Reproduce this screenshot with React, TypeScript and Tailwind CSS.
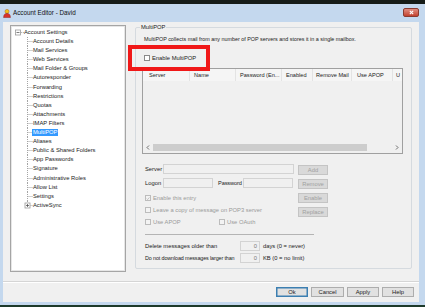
import React from "react";

const font = "font-['Liberation_Sans',Arial,sans-serif]";

const treeChildren = [
  "Account Details",
  "Mail Services",
  "Web Services",
  "Mail Folder & Groups",
  "Autoresponder",
  "Forwarding",
  "Restrictions",
  "Quotas",
  "Attachments",
  "IMAP Filters",
  "MultiPOP",
  "Aliases",
  "Public & Shared Folders",
  "App Passwords",
  "Signature",
  "Administrative Roles",
  "Allow List",
  "Settings",
  "ActiveSync",
];

const columns = [
  { label: "Server", w: "w-[47px]", pl: "pl-[6px]" },
  { label: "Name", w: "w-[46px]", pl: "pl-[4px]" },
  { label: "Password (En...", w: "w-[46px]", pl: "pl-[4px]" },
  { label: "Enabled", w: "w-[31px]", pl: "pl-[4px]" },
  { label: "Remove Mail", w: "w-[39px]", pl: "pl-[3px]" },
  { label: "Use APOP", w: "w-[41px]", pl: "pl-[5px]" },
  { label: "U", w: "w-[20px]", pl: "pl-[3px]" },
];

const Connector = ({ last, plus }: { last?: boolean; plus?: boolean }) => (
  <svg width="9" height="9.1" viewBox="0 0 9 9.1" className="shrink-0">
    <line x1="3.5" y1="0" x2="3.5" y2={last ? 4.5 : 9.1} stroke="#a3a3a3" strokeDasharray="1 1" />
    <line x1="3.5" y1="4.5" x2="9" y2="4.5" stroke="#a3a3a3" strokeDasharray="1 1" />
    {plus && (
      <>
        <rect x="1" y="2" width="5" height="5" fill="#fff" stroke="#9a9a9a" strokeWidth="0.8" />
        <line x1="2" y1="4.5" x2="5" y2="4.5" stroke="#444" strokeWidth="0.7" />
        <line x1="3.5" y1="3" x2="3.5" y2="6" stroke="#444" strokeWidth="0.7" />
      </>
    )}
  </svg>
);

const Check = ({ checked, disabled }: { checked?: boolean; disabled?: boolean }) => (
  <span
    className={`flex h-[6px] w-[6px] shrink-0 items-center justify-center border ${
      disabled ? "border-[#bcbcbc] bg-[#f3f3f3]" : "border-[#8a8a8a] bg-white"
    }`}
  >
    {checked && (
      <svg width="5" height="5" viewBox="0 0 5 5">
        <path d="M0.8 2.6 L2 3.8 L4.3 1.1" fill="none" stroke="#a8a8a8" strokeWidth="0.8" />
      </svg>
    )}
  </span>
);

const CheckRow = ({ label, checked, disabled }: { label: string; checked?: boolean; disabled?: boolean }) => (
  <div className="flex h-[6px] items-center gap-[2px]">
    <Check checked={checked} disabled={disabled} />
    <span className={`whitespace-nowrap text-[5.8px] leading-[6px] ${disabled ? "text-[#9a9a9a]" : "text-[#1a1a1a]"}`}>
      {label}
    </span>
  </div>
);

const Field = ({ w, value }: { w: string; value?: string }) => (
  <div className={`${w} h-[10px] shrink-0 border border-[#d3d3d3] bg-[#f0f0f0] pr-[2px] text-right text-[5.8px] leading-[8px] text-[#7a7a7a]`}>
    {value}
  </div>
);

const SideButton = ({ label }: { label: string }) => (
  <div className="flex h-[10px] w-[30px] items-center justify-center border border-[#c4c4c4] bg-[#d9d9d9] text-[5.8px] text-[#a0a0a0]">
    {label}
  </div>
);

const DialogButton = ({ label, w, primary }: { label: string; w: string; primary?: boolean }) => (
  <div
    className={`flex h-[10px] ${w} items-center justify-center border bg-[#e1e1e1] text-[5.8px] text-[#1a1a1a] ${
      primary ? "border-[#3c7fb1] shadow-[inset_0_0_0_0.5px_#3c7fb1]" : "border-[#adadad]"
    }`}
  >
    {label}
  </div>
);

const Chevron = ({ dir }: { dir: "l" | "r" }) => (
  <svg width="4" height="5" viewBox="0 0 4 5">
    <path d={dir === "l" ? "M3 0.5 L1 2.5 L3 4.5" : "M1 0.5 L3 2.5 L1 4.5"} fill="none" stroke="#606060" strokeWidth="0.9" />
  </svg>
);

export default function App() {
  return (
    <div className={`relative flex h-[307px] w-[425px] flex-col overflow-hidden bg-[#1d3a2b] text-[#1a1a1a] ${font}`}>
      <div className="h-[4px] shrink-0 bg-[#161c18]" />

      {/* window frame */}
      <div className="flex h-[301px] shrink-0 flex-col bg-[#c4d8ee] pb-[3px] pl-[3px] pr-[6px]">
        {/* title bar */}
        <div className="flex h-[18px] shrink-0 items-center">
          <svg width="8" height="9" viewBox="0 0 8 9" className="shrink-0">
            <circle cx="4" cy="2.4" r="2" fill="#f2c21b" stroke="#b3650f" strokeWidth="0.5" />
            <path d="M0.6 8.6 C0.6 5.4 2 4.4 4 4.4 C6 4.4 7.4 5.4 7.4 8.6 Z" fill="#d8322a" stroke="#8e1a14" strokeWidth="0.5" />
          </svg>
          <span className="ml-[2px] text-[6.3px] text-[#111]">Account Editor - David</span>
          <div className="ml-auto mt-[-2px] flex h-[9px] w-[16px] items-center justify-center rounded-[2px] border border-[#8a3b30] bg-gradient-to-b from-[#e08c80] to-[#c2402d]">
            <svg width="5" height="5" viewBox="0 0 5 5">
              <path d="M0.8 0.8 L4.2 4.2 M4.2 0.8 L0.8 4.2" stroke="#fff" strokeWidth="1.1" />
            </svg>
          </div>
        </div>

        {/* client area */}
        <div className="flex flex-1 flex-col bg-[#f0f0f0]">
          <div className="flex h-[250px] shrink-0 items-start pt-[3px]">
            {/* tree */}
            <div className="ml-[7px] h-[247px] w-[116px] shrink-0 border border-[#a5a5a5] bg-white pt-[2px] shadow-[inset_0_0_0_1px_#e6e6e6]">
              <div className="flex h-[9.1px] items-center">
                <svg width="13" height="9.1" viewBox="0 0 13 9.1" className="shrink-0">
                  <rect x="4.5" y="2" width="5" height="5" fill="#fff" stroke="#9a9a9a" strokeWidth="0.8" />
                  <line x1="5.5" y1="4.5" x2="8.5" y2="4.5" stroke="#444" strokeWidth="0.7" />
                  <line x1="9.8" y1="4.5" x2="13" y2="4.5" stroke="#a3a3a3" strokeDasharray="1 1" />
                </svg>
                <span className="text-[5.8px] leading-[9.1px]">Account Settings</span>
              </div>
              {treeChildren.map((item, i) => {
                const last = i === treeChildren.length - 1;
                return (
                  <div key={item} className="flex h-[9.1px] items-center pl-[13px]">
                    <Connector last={last} plus={last} />
                    {item === "MultiPOP" ? (
                      <span className="-ml-[1px] bg-[#3399ff] px-[1px] text-[5.8px] leading-[7px] text-white">{item}</span>
                    ) : (
                      <span className="whitespace-nowrap text-[5.8px] leading-[9.1px]">{item}</span>
                    )}
                  </div>
                );
              })}
            </div>

            {/* group box */}
            <div className="relative ml-[9px] mt-[2px] flex h-[242px] w-[277px] shrink-0 flex-col rounded-[2px] border border-[#d5dadf] pl-[6px]">
              <span className="absolute -top-[4px] left-[4px] bg-[#f0f0f0] px-[1px] text-[5.8px] leading-[7px]">MultiPOP</span>

              <div className="ml-[2px] mt-[7px] h-[8px] whitespace-nowrap text-[5.4px] leading-[8px]">
                MultiPOP collects mail from any number of POP servers and stores it in a single mailbox.
              </div>

              <div className="ml-[2px] mt-[12px]">
                <CheckRow label="Enable MultiPOP" />
              </div>

              {/* list view */}
              <div className="mt-[7px] flex h-[86px] w-[261px] flex-col border border-[#a0a0a0] bg-[#f0f0f0]">
                <div className="flex h-[12px] shrink-0 bg-[#f5f5f5]">
                  {columns.map((c, i) => (
                    <div
                      key={c.label}
                      className={`${c.w} ${c.pl} flex shrink-0 items-center overflow-hidden whitespace-nowrap text-[5.6px] ${
                        i < columns.length - 1 ? "border-r border-[#e3e3e3]" : ""
                      }`}
                    >
                      {c.label}
                    </div>
                  ))}
                </div>
                <div className="flex-1" />
                <div className="mb-[2px] flex h-[8px] shrink-0 items-center">
                  <div className="flex w-[10px] justify-center">
                    <Chevron dir="l" />
                  </div>
                  <div className="h-[7px] w-[214px] bg-[#cdcdcd]" />
                  <div className="flex-1" />
                  <div className="flex w-[10px] justify-center">
                    <Chevron dir="r" />
                  </div>
                </div>
              </div>

              {/* entry editor */}
              <div className="mt-[10px] flex">
                <div className="ml-[3px] flex w-[149px] flex-col">
                  <div className="flex h-[10px] items-center">
                    <span className="w-[18px] shrink-0 text-[5.8px]">Server</span>
                    <Field w="flex-1" />
                  </div>
                  <div className="mt-[4px] flex h-[10px] items-center">
                    <span className="w-[18px] shrink-0 text-[5.8px]">Logon</span>
                    <Field w="w-[50px]" />
                    <span className="ml-[5px] w-[25px] shrink-0 whitespace-nowrap text-[5.6px] tracking-[-0.1px]">Password</span>
                    <Field w="w-[50px]" />
                  </div>
                  <div className="mt-[7px] flex flex-col gap-[6px]">
                    <CheckRow label="Enable this entry" checked disabled />
                    <CheckRow label="Leave a copy of message on POP3 server" disabled />
                    <div className="flex">
                      <div className="w-[74px]">
                        <CheckRow label="Use APOP" disabled />
                      </div>
                      <CheckRow label="Use OAuth" disabled />
                    </div>
                  </div>
                </div>
                <div className="ml-[4px] mt-[1px] flex flex-col gap-[4px]">
                  <SideButton label="Add" />
                  <SideButton label="Remove" />
                  <SideButton label="Enable" />
                  <SideButton label="Replace" />
                </div>
              </div>

              <div className="ml-[3px] mt-[9px] h-[1px] w-[169px] bg-[#b4b4b4]" />

              <div className="ml-[3px] mt-[6px] flex h-[10px] items-center">
                <span className="w-[95px] shrink-0 whitespace-nowrap text-[5.8px]">Delete messages older than</span>
                <Field w="w-[20px]" value="0" />
                <span className="ml-[3px] whitespace-nowrap text-[5.8px]">days (0 = never)</span>
              </div>
              <div className="ml-[3px] mt-[2px] flex h-[10px] items-center">
                <span className="w-[95px] shrink-0 whitespace-nowrap text-[5.4px] tracking-[-0.12px]">
                  Do not download messages larger than
                </span>
                <Field w="w-[20px]" value="0" />
                <span className="ml-[3px] whitespace-nowrap text-[5.8px]">KB (0 = no limit)</span>
              </div>
            </div>
          </div>

          <div className="mt-[9px] h-[2px] shrink-0 border-b border-t border-b-white border-t-[#d5d5d5]" />

          <div className="mt-[4px] flex h-[10px] shrink-0 justify-end gap-[3px] pr-[5px]">
            <DialogButton label="Ok" w="w-[32px]" primary />
            <DialogButton label="Cancel" w="w-[33px]" />
            <DialogButton label="Apply" w="w-[32px]" />
            <DialogButton label="Help" w="w-[32px]" />
          </div>
        </div>
      </div>

      <div className="flex-1 bg-[#1d3a2b]" />

      {/* red annotation box */}
      <div className="absolute left-[128px] top-[45px] h-[26px] w-[82px] border-[4px] border-[#f01818]" />
    </div>
  );
}
